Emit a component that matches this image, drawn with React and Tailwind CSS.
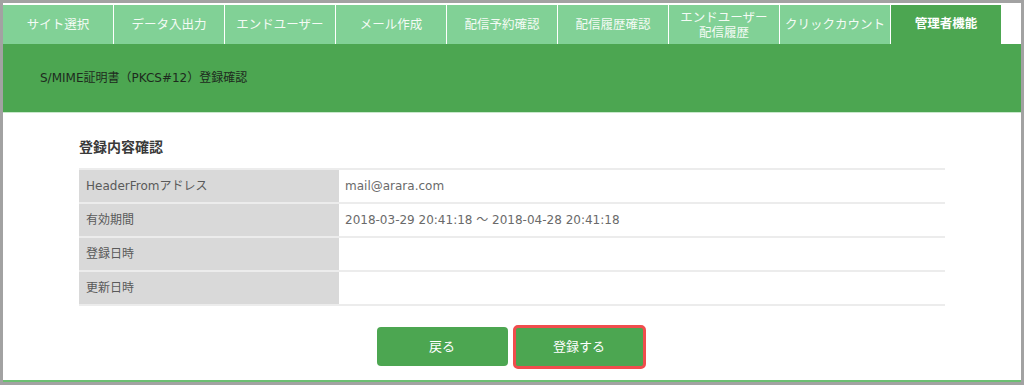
const tabs = [
  'サイト選択',
  'データ入出力',
  'エンドユーザー',
  'メール作成',
  '配信予約確認',
  '配信履歴確認',
  'エンドユーザー\n配信履歴',
  'クリックカウント',
]

const rows = [
  ['HeaderFromアドレス', 'mail@arara.com'],
  ['有効期間', '2018-03-29 20:41:18 ～ 2018-04-28 20:41:18'],
  ['登録日時', ''],
  ['更新日時', ''],
]

export default function App() {
  return (
    <div
      className="w-[1024px] h-[385px] border-[3px] border-[#a2a2a2] bg-white flex flex-col overflow-hidden"
      style={{ fontFamily: '"DejaVu Sans", "Noto Sans CJK JP", sans-serif' }}
    >
      <div className="pt-[2px] flex gap-px">
        {tabs.map((t) => (
          <div
            key={t}
            className="w-[110px] h-[39px] bg-[#81d196] text-[#f4fbf5] text-[12.5px] leading-[15px] flex items-center justify-center text-center whitespace-pre-line"
          >
            {t}
          </div>
        ))}
        <div className="w-[110px] h-[39px] bg-[#4ca651] text-white text-[12.5px] font-bold flex items-center justify-center">
          管理者機能
        </div>
      </div>

      <div className="h-[68px] bg-[#4ca651] flex items-center pl-[37px] text-[12px] text-[#1e2a1e]">
        S/MIME証明書（PKCS#12）登録確認
      </div>
      <div className="h-px bg-[#c9e8cc]" />

      <div className="flex-1 px-[76px] pt-[25px]">
        <h2 className="text-[14px] font-bold text-[#3a3a3a] leading-[18px]">登録内容確認</h2>
        <div className="mt-[12px] border-t-2 border-[#ececec]">
          {rows.map(([label, value]) => (
            <div key={label} className="flex h-[34px] border-b-2 border-[#ececec]">
              <div className="w-[260px] bg-[#d9d9d9] flex items-center pl-[7px] text-[12px] text-[#5a5a5a]">
                {label}
              </div>
              <div className="flex-1 flex items-center pl-[6px] text-[12px] text-[#6a6a6a]">
                {value}
              </div>
            </div>
          ))}
        </div>

        <div className="mt-[19px] flex justify-center gap-[5px] pr-[2px]">
          <button className="w-[131px] h-[39px] mt-[2px] bg-[#4ca651] rounded-[4px] text-white text-[13px]">
            戻る
          </button>
          <button className="w-[133px] h-[44px] bg-[#4ca651] rounded-[5px] border-[3px] border-[#f04d4d] text-white text-[13px]">
            登録する
          </button>
        </div>
      </div>

      <div className="h-[2px] bg-[#6cbf72]" />
    </div>
  )
}
